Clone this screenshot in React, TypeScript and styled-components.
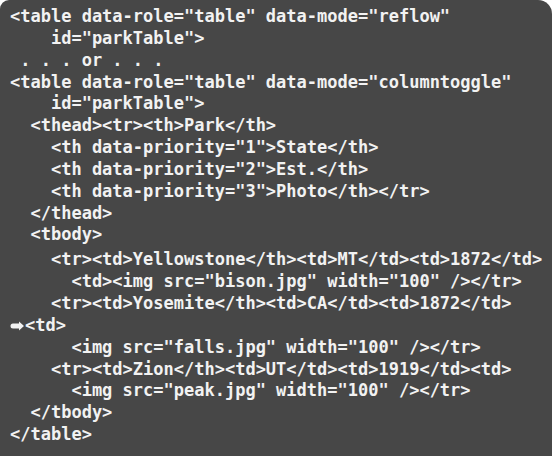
import React from "react";
import styled, { createGlobalStyle } from "styled-components";

const Global = createGlobalStyle`
  html, body { margin: 0; padding: 0; background: #ffffff; }
  #root { width: 555px; height: 456px; overflow: hidden; }
`;

const Panel = styled.div`
  width: 552px;
  height: 456px;
  box-sizing: border-box;
  background: #474747;
  border-radius: 9px 14px 0 0;
  padding: 6px 0 0 10px;
  font-family: "DejaVu Sans Mono", "Liberation Mono", monospace;
  font-weight: bold;
  font-size: 17px;
  color: #f2f2f2;
`;

const Line = styled.div<{ $extra?: number }>`
  height: 21.85px;
  line-height: 21.85px;
  white-space: pre;
  margin-top: ${(p) => p.$extra ?? 0}px;
  display: flex;
  align-items: center;
`;

const Arrow = styled.svg`
  width: 15px;
  height: 10px;
  flex: none;
`;

const lines: { text: string; extra?: number; arrow?: boolean }[] = [
  { text: '<table data-role="table" data-mode="reflow"' },
  { text: '    id="parkTable">' },
  { text: ' . . . or . . .' },
  { text: '<table data-role="table" data-mode="columntoggle"' },
  { text: '    id="parkTable">' },
  { text: '  <thead><tr><th>Park</th>' },
  { text: '    <th data-priority="1">State</th>' },
  { text: '    <th data-priority="2">Est.</th>' },
  { text: '    <th data-priority="3">Photo</th></tr>' },
  { text: '  </thead>' },
  { text: '  <tbody>' },
  { text: '    <tr><td>Yellowstone</th><td>MT</td><td>1872</td>', extra: 3 },
  { text: '      <td><img src="bison.jpg" width="100" /></tr>' },
  { text: '    <tr><td>Yosemite</th><td>CA</td><td>1872</td>' },
  { text: '<td>', arrow: true },
  { text: '      <img src="falls.jpg" width="100" /></tr>' },
  { text: '    <tr><td>Zion</th><td>UT</td><td>1919</td><td>' },
  { text: '      <img src="peak.jpg" width="100" /></tr>' },
  { text: '  </tbody>' },
  { text: '</table>' },
];

export default function App() {
  return (
    <>
      <Global />
      <Panel>
        {lines.map((l, i) => (
          <Line key={i} $extra={l.extra}>
            {l.arrow && (
              <Arrow viewBox="0 0 15 10">
                <path d="M3 2.5 H9 V0.5 L14 5 L9 9.5 V7.5 H3 A2.5 2.5 0 0 1 3 2.5 Z" fill="#f2f2f2" />
              </Arrow>
            )}
            {l.text}
          </Line>
        ))}
      </Panel>
    </>
  );
}
